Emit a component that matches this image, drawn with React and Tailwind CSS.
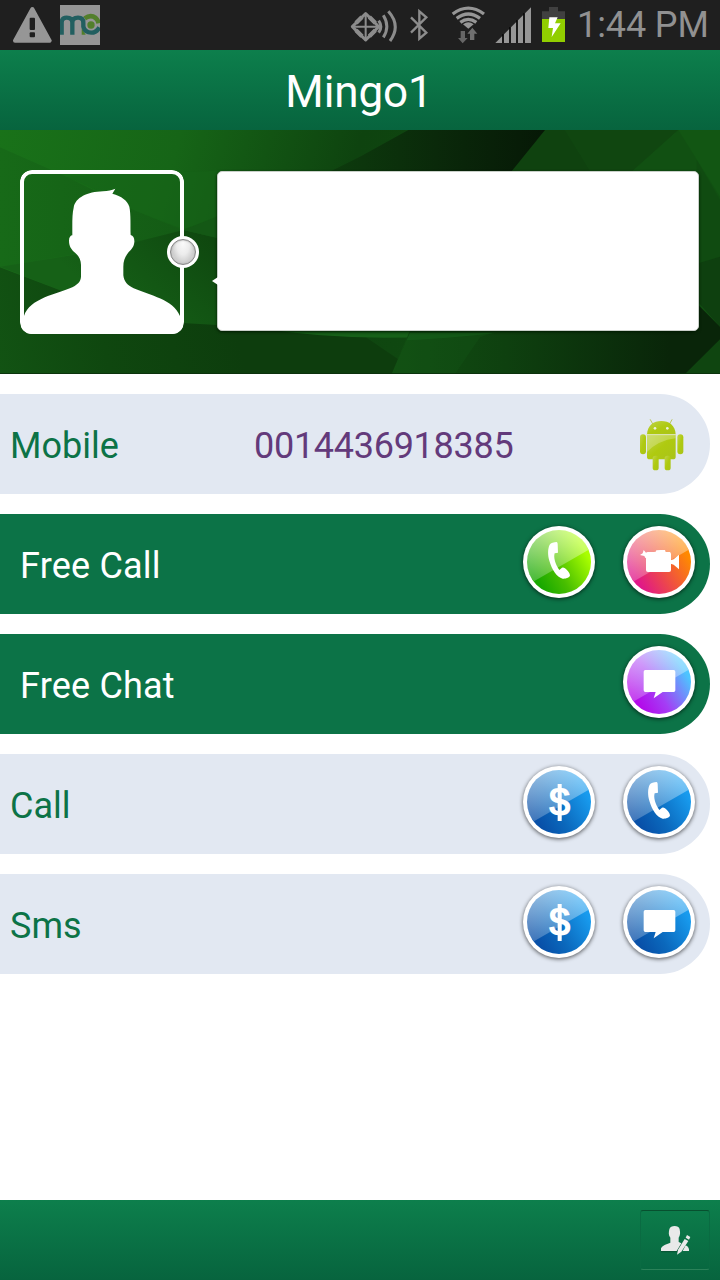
import { useId } from "react";

export default function App() {
  return (
    <div className="flex h-[1280px] w-[720px] flex-col overflow-hidden bg-white font-['Roboto',sans-serif]">
      <StatusBar />
      <header className="flex h-20 items-center justify-center bg-linear-to-b from-[#0d7f4c] to-[#07643e] pt-1 pr-0.5">
        <h1 className="text-[44px] leading-none tracking-[-0.1px] text-white">Mingo1</h1>
      </header>
      <ProfileHeader />

      <main className="flex flex-1 flex-col gap-5 pt-5 pr-2.5">
        <Row label="Mobile">
          <span className="absolute top-[31px] left-[254px] text-4xl leading-[42px] tracking-[-0.28px] text-[#633a7b]">
            0014436918385
          </span>
          <AndroidIcon />
        </Row>
        <Row label="Free Call" solid>
          <RoundButton tone="green" glyph="phone" />
          <RoundButton tone="orange" glyph="camera" />
        </Row>
        <Row label="Free Chat" solid>
          <RoundButton tone="violet" glyph="chat" />
        </Row>
        <Row label="Call">
          <RoundButton tone="blue" glyph="dollar" />
          <RoundButton tone="blue" glyph="phone" />
        </Row>
        <Row label="Sms">
          <RoundButton tone="blue" glyph="dollar" />
          <RoundButton tone="blue" glyph="chat" />
        </Row>
      </main>

      <footer className="flex h-20 items-center justify-end bg-linear-to-b from-[#0d7f4c] to-[#07643e] pr-2.5">
        <button
          aria-label="Edit contact"
          className="h-[60px] w-[70px] rounded-[3px] border border-x-[#0a6b42] border-t-[#07502f] border-b-[#2b8259]"
        >
          <svg viewBox="63 63 204 174" className="h-full w-full">
            <path
              d="M123 187V179C128 168 142 167 151 162H176L187 168L172 187Z"
              fill="#063f27"
              opacity=".5"
            />
            <g fill="#e9e9e9">
              <path d="M123 183V175C128 164 142 163 151 158V143C145 136 146 127 148 118C151 105 177 105 179 118C181 128 181 136 176 143V156L184 160L170 183Z" />
              <path d="M197 166C205 170 208 176 207 183H188Z" />
              <path d="M201 135L211 141L207 149L197 143ZM194 147L205 153L184 185L171 194L174 179Z" />
            </g>
          </svg>
        </button>
      </footer>
    </div>
  );
}

function StatusBar() {
  return (
    <div className="flex h-[50px] shrink-0 items-start bg-[#1f1f1f]">
      <svg viewBox="36 0 120 150" className="ml-3 h-[50px] w-10">
        <path d="M97 27L149 122H45Z" fill="#969696" stroke="#969696" strokeWidth="12" strokeLinejoin="round" />
        <rect x="89" y="53" width="16" height="37" rx="3" fill="#1f1f1f" />
        <rect x="89" y="97" width="16" height="15" rx="3" fill="#1f1f1f" />
      </svg>
      <svg viewBox="180 0 120 150" className="ml-2 h-[50px] w-10">
        <rect x="180" y="15" width="120" height="120" fill="#969696" />
        <path d="M254 55Q272 43 287 54Q294 60 296 70" fill="none" stroke="#527f2b" strokeWidth="14" />
        <path d="M245 84L257 104H245Z" fill="#527f2b" />
        <circle cx="273" cy="75" r="11" fill="#527f2b" />
        <path
          d="M185 104V68Q185 53 200 53Q217 53 217 68V104M217 68Q217 53 234 53Q250 53 250 68V80Q255 98 274 98Q290 98 298 82"
          fill="none"
          stroke="#225f60"
          strokeWidth="13"
        />
      </svg>

      <div className="ml-auto flex items-start">
        {/* Sound */}
        <svg viewBox="27 0 144 150" className="h-[50px] w-12" fill="none" stroke="#8c8c8c">
          <path d="M34 80L57 57L74 41L91 57L113 80L91 103L74 120L57 103Z" strokeWidth="9" strokeLinejoin="round" />
          <path d="M45 69L63 51M85 51L103 69M103 91L85 109M63 109L45 91" strokeWidth="13" />
          <path d="M33 80H114M74 39V122" strokeWidth="6" />
          <path d="M113 62Q126 80 113 98M127 46Q148 80 127 112M142 34Q181 78 147 123" strokeWidth="9" />
        </svg>
        <svg viewBox="210 0 57 150" className="ml-3 h-[50px] w-[19px]" fill="none" stroke="#8c8c8c" strokeWidth="7">
          <path d="M213 52L259 98L238 116V34L259 52L213 98" />
        </svg>
        <svg viewBox="333 0 105 150" className="ml-[22px] h-[50px] w-[35px]" fill="none" stroke="#969696">
          <path d="M338 42Q385 7 432 42M350 55Q385 29 420 55M361 67Q385 49 409 67" strokeWidth="10" />
          <path d="M369 73Q385 60 401 73L385 86Z" fill="#969696" stroke="none" />
          <path d="M362 93H375V114H383L368 130L354 114H362Z" fill="#666" stroke="none" />
          <path d="M390 120H403V101H412L397 83L382 101H390Z" fill="#707070" stroke="none" />
        </svg>
        <svg viewBox="465 0 111 150" className="ml-[9px] h-[50px] w-[37px]">
          <path d="M466 129L573 22V129Z" fill="#969696" />
          <path d="M489 103V129M510 82V129M531 61V129M552 40V129" stroke="#000" strokeWidth="5" />
        </svg>
        <svg viewBox="66 0 69 150" className="ml-[10px] h-[50px] w-[23px]">
          <path d="M66 34H87V21H114V34H135V58H66Z" fill="#404040" />
          <path d="M66 57H135V126H66Z" fill="#91ce00" />
          <path d="M88 52H113L105 70H122L95 111L99 84H85Z" fill="#fff" />
        </svg>
        <span className="ml-3 w-[143px] pt-[6px] text-4xl leading-[38px] font-normal tracking-[-0.1px] whitespace-nowrap text-[#919191]">
          1:44 PM
        </span>
      </div>
    </div>
  );
}

function ProfileHeader() {
  return (
    <section className="relative flex h-[244px] shrink-0 items-start overflow-hidden">
      <Backdrop />
      <div className="relative mt-10 ml-5 h-[164px] w-[164px]">
        <svg viewBox="30 30 492 492" className="h-full w-full rounded-xl">
          <rect x="36" y="36" width="480" height="480" rx="30" fill="none" stroke="#fff" strokeWidth="12" />
          <path
            fill="#fff"
            d="M34 522V468H42C59 415 139 403 187 382C208 371 213 361 213 348V315C213 299 206 287 196 279C184 268 177 259 177 242C177 232 182 226 187 226C187 194 186 162 191 143C196 113 232 95 279 94C294 93 305 90 316 86L307 101C335 109 352 121 358 140C363 163 361 198 362 225C370 227 374 235 373 247C371 264 362 270 354 279C345 291 340 302 340 321V346C342 364 352 376 371 385C421 407 489 418 510 468H518V522Z"
          />
        </svg>
        {/* Presence dot */}
        <div className="absolute top-[66px] left-[147px] flex h-8 w-8 items-center justify-center rounded-full bg-white">
          <div className="h-[26px] w-[26px] rounded-full border border-[#858585] bg-[radial-gradient(ellipse_at_50%_15%,#fafafa_0%,#ececec_38%,#d0d0d0_65%,#e0e0e0_100%)] shadow-[inset_0_0_2px_#999]" />
        </div>
      </div>
      <div className="relative mt-[41px] ml-[33px] h-40 w-[482px] rounded-[5px] border border-[#c9cfc9] bg-white shadow-[0_1px_3px_#001900]">
        <svg viewBox="0 0 6 8" className="absolute top-[105px] -left-[6px] h-2 w-1.5">
          <path d="M0 4L6 0V8Z" fill="#fff" />
        </svg>
      </div>
    </section>
  );
}

// Faceted green background
function Backdrop() {
  return (
    <svg viewBox="0 0 2160 732" className="absolute inset-0 h-full w-full" preserveAspectRatio="none">
      <defs>
        <linearGradient id="bgBase" x1="0" y1="0" x2="1" y2="0.1">
          <stop offset="0" stopColor="#197219" />
          <stop offset=".25" stopColor="#166517" />
          <stop offset=".5" stopColor="#0e430f" />
          <stop offset="1" stopColor="#125313" />
        </linearGradient>
        <linearGradient id="bgDark" x1="0" y1="0" x2="1" y2="0">
          <stop offset="0" stopColor="#0d3c0d" />
          <stop offset=".5" stopColor="#0a290a" />
          <stop offset="1" stopColor="#061806" />
        </linearGradient>
        <linearGradient id="bgLeft" x1="0" y1="0" x2="1" y2="0">
          <stop offset="0" stopColor="#176a18" />
          <stop offset="1" stopColor="#145b15" />
        </linearGradient>
        <linearGradient id="bgMid" gradientUnits="userSpaceOnUse" x1="350" y1="560" x2="600" y2="300">
          <stop offset="0" stopColor="#166117" />
          <stop offset=".55" stopColor="#125413" />
          <stop offset="1" stopColor="#0f480f" />
        </linearGradient>
        <linearGradient id="bgFloor" gradientUnits="userSpaceOnUse" x1="0" y1="732" x2="700" y2="560">
          <stop offset="0" stopColor="#125313" />
          <stop offset=".45" stopColor="#0f470f" />
          <stop offset="1" stopColor="#0d3d0d" />
        </linearGradient>
        <linearGradient id="bgFloorRight" x1="0" y1="0" x2="1" y2="0">
          <stop offset="0" stopColor="#114f12" />
          <stop offset=".35" stopColor="#0e400f" />
          <stop offset=".85" stopColor="#092509" />
          <stop offset="1" stopColor="#092509" />
        </linearGradient>
      </defs>
      <rect width="2160" height="732" fill="url(#bgBase)" />
      <path d="M0 52L200 140L400 240L550 300L380 345L0 412Z" fill="url(#bgLeft)" />
      <path d="M200 140Q300 180 400 240L550 298L700 250V120Z" fill="#166417" opacity=".5" />
      <path d="M0 410L250 370L410 335L550 300L700 335V600L560 580L200 488Z" fill="url(#bgMid)" />
      <path d="M550 300L700 240V335Z" fill="#145815" />
      <path d="M0 412L200 488L380 545L560 580L1080 610L1260 732H0Z" fill="url(#bgFloor)" />
      <path d="M750 590Q1100 650 1500 602Z" fill="#176119" />
      <path d="M980 130L1080 80L1225 0H1640L1535 130Z" fill="url(#bgDark)" />
      <path d="M1635 0H1695L1775 130H1530Z" fill="#0f420f" />
      <path d="M1695 0H2035L1890 130H1775Z" fill="#104610" />
      <path d="M2035 0H2160V732H2000V130H1890Z" fill="#115012" />
      <path d="M2035 0H2160V200Z" fill="#125613" />
      <path d="M2090 90L2160 210V400H2090Z" fill="#104b11" />
      <path d="M2095 400L2160 380V590L2080 500Z" fill="#0e400f" />
      <path d="M1230 600L1175 732H2060L2160 632V590L2090 520V600Z" fill="url(#bgFloorRight)" />
      <path d="M1230 608H1480L1440 622L1365 732H1175Z" fill="#145516" opacity=".35" />
      <path d="M1230 608H1490Q1380 622 1220 631Z" fill="#16601a" opacity=".6" />
      <path d="M2055 732L2160 628V732Z" fill="#0f4510" />
      <path d="M0 731H2160" stroke="#0b300c" strokeWidth="3" />
    </svg>
  );
}

function Row({ label, solid, children }) {
  return (
    <div
      className={`relative flex h-[100px] items-center rounded-r-full pr-[15px] ${
        solid
          ? "bg-[#0c7347] pl-5 tracking-[0.2px] text-white"
          : "bg-[#e2e8f2] pl-2.5 text-[#0c7347]"
      }`}
    >
      <span className="pt-[3px] text-4xl leading-[42px]">{label}</span>
      <div className="ml-auto flex items-center gap-7">{children}</div>
    </div>
  );
}

const TONES = {
  green: ["#18a800", "#48be00", "#aaff00"],
  orange: ["#e01888", "#ec444f", "#ff8a00"],
  violet: ["#b30bea", "#a43df5", "#4dc5ff"],
  blue: ["#0850a8", "#0b69bd", "#189bee"],
};

function RoundButton({ tone, glyph }) {
  const id = useId();
  const [start, mid, end] = TONES[tone];
  return (
    <button className="-mt-1 h-[72px] w-[72px] rounded-full bg-white shadow-[0_1px_4px_rgba(0,0,0,0.65)]">
      {/* three drawing units to the pixel */}
      <svg viewBox="39 48 216 216" className="h-full w-full">
        <defs>
          <linearGradient id={id} x1=".2" y1=".85" x2=".95" y2=".4">
            <stop offset="0" stopColor={start} />
            <stop offset=".4" stopColor={mid} />
            <stop offset="1" stopColor={end} />
          </linearGradient>
          <linearGradient id={`${id}s`} x1=".5" y1="0" x2=".75" y2="1">
            <stop offset="0" stopColor="#fff" stopOpacity=".56" />
            <stop offset="1" stopColor="#fff" stopOpacity=".16" />
          </linearGradient>
        </defs>
        <circle cx="147" cy="156" r="96" fill={`url(#${id})`} />
        <path d="M72 214A96 96 0 1 1 235 120Z" fill={`url(#${id}s)`} />
        <Glyph name={glyph} />
      </svg>
    </button>
  );
}

function Glyph({ name }) {
  if (name === "phone") {
    return (
      <path
        fill="#fff"
        d="M119 104C122 99 132 97 140 96Q143 97 143 102L144 128L134 130C130 143 136 162 148 180L156 173Q160 171 165 175C172 180 179 188 180 196C179 203 168 207 158 206C140 200 126 180 118 152C113 135 113 116 119 104Z"
      />
    );
  }
  if (name === "camera") {
    return (
      <g fill="#fff">
        <rect x="108" y="126" width="75" height="60" rx="6" />
        <path d="M116 128L137 125L139 121L152 120H165L167 126H180V132H116Z" />
        <path d="M90 135L98 130L101 120L108 128L116 127V142L106 144L103 138Z" />
        <path d="M182 151L191 148L207 134V178L191 164L182 161Z" />
      </g>
    );
  }
  if (name === "chat") {
    return (
      <path
        fill="#fff"
        d="M106 120H191Q196 120 196 125V181Q196 186 191 186H158L131 205L137 186H106Q101 186 101 181V125Q101 120 106 120Z"
      />
    );
  }
  return (
    <g fill="#fff">
      <text
        x="149"
        y="199"
        textAnchor="middle"
        className="font-['Liberation_Sans',sans-serif] text-[120px] font-bold"
      >
        $
      </text>
      <rect x="143" y="102" width="12" height="111" />
    </g>
  );
}

function AndroidIcon() {
  return (
    <svg viewBox="57 75 144 180" className="mr-2 h-[60px] w-12">
      <defs>
        <linearGradient id="droid" x1="0" y1="0" x2="1" y2="1">
          <stop offset="0" stopColor="#bfd34b" />
          <stop offset=".5" stopColor="#afca10" />
          <stop offset="1" stopColor="#a9c31a" />
        </linearGradient>
      </defs>
      <path d="M91 92L100 108M156 92L147 108" stroke="#bac85b" strokeWidth="3" strokeLinecap="round" />
      <g fill="url(#droid)">
        <path d="M81 136C82 109 101 96 124 96S166 109 167 136Z" />
        <path d="M81 138H167V203Q167 211 159 211H89Q81 211 81 203Z" />
        <rect x="60" y="136" width="18" height="60" rx="9" />
        <rect x="172" y="136" width="18" height="60" rx="9" />
        <rect x="98" y="200" width="18" height="44" rx="8" />
        <rect x="134" y="200" width="18" height="44" rx="8" />
      </g>
      <path d="M81 138H167V148Q115 154 81 189Z" fill="#fff" opacity=".23" />
      <path d="M80 137H168" stroke="#dce5ac" strokeWidth="3" />
      <circle cx="105" cy="118" r="4" fill="#eef1d9" />
      <circle cx="142" cy="118" r="4" fill="#eef1d9" />
    </svg>
  );
}
